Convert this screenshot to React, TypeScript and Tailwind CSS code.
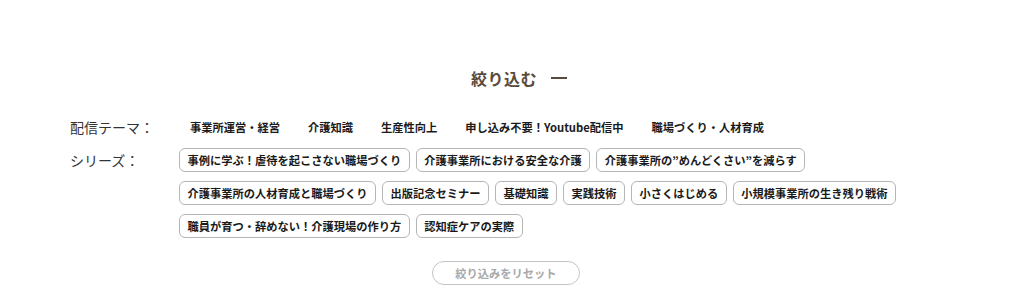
const themes = [
  "事業所運営・経営",
  "介護知識",
  "生産性向上",
  "申し込み不要！Youtube配信中",
  "職場づくり・人材育成",
];

const series = [
  "事例に学ぶ！虐待を起こさない職場づくり",
  "介護事業所における安全な介護",
  "介護事業所の”めんどくさい”を減らす",
  "介護事業所の人材育成と職場づくり",
  "出版記念セミナー",
  "基礎知識",
  "実践技術",
  "小さくはじめる",
  "小規模事業所の生き残り戦術",
  "職員が育つ・辞めない！介護現場の作り方",
  "認知症ケアの実際",
];

function Chip({ label, bordered }: { label: string; bordered: boolean }) {
  return (
    <button
      className={
        "h-[24px] rounded-[6px] border text-[11.25px] font-bold leading-[22px] text-[#1a1a1a] whitespace-nowrap " +
        (bordered ? "px-[7.5px] border-[#b5b5b5]" : "px-[10px] border-transparent")
      }
    >
      {label}
    </button>
  );
}

export default function App() {
  return (
    <div
      className="w-[1024px] h-[306px] bg-white overflow-hidden"
      style={{ fontFamily: '"Noto Sans CJK JP", "Noto Sans", sans-serif' }}
    >
      <div className="pt-[66px] flex justify-center items-center pl-[14px]">
        <span className="text-[16px] font-bold leading-[24px] text-[#5a4a3a] tracking-[0.5px]">
          絞り込む
        </span>
        <span className="ml-[14px] w-[16px] h-[2px] bg-[#5a4a3a]" />
      </div>

      <div className="mt-[25px] pl-[70px] pr-[66px]">
        <div className="flex items-start">
          <div className="w-[109px] shrink-0 text-[14px] leading-[24px] text-[#333]">
            配信テーマ：
          </div>
          <div className="flex flex-wrap gap-x-[6px] gap-y-[9px]">
            {themes.map((t) => (
              <Chip key={t} label={t} bordered={false} />
            ))}
          </div>
        </div>

        <div className="flex items-start mt-[9px]">
          <div className="w-[109px] shrink-0 text-[14px] leading-[24px] text-[#333]">
            シリーズ：
          </div>
          <div className="flex flex-wrap gap-x-[6px] gap-y-[9px]">
            {series.map((s) => (
              <Chip key={s} label={s} bordered={true} />
            ))}
          </div>
        </div>
      </div>

      <div className="mt-[23px] flex justify-center pr-[12px]">
        <button className="w-[148px] h-[24px] rounded-full border border-[#c4c4c4] text-[11.25px] font-bold text-[#a8a8a8] leading-[22px]">
          絞り込みをリセット
        </button>
      </div>
    </div>
  );
}
